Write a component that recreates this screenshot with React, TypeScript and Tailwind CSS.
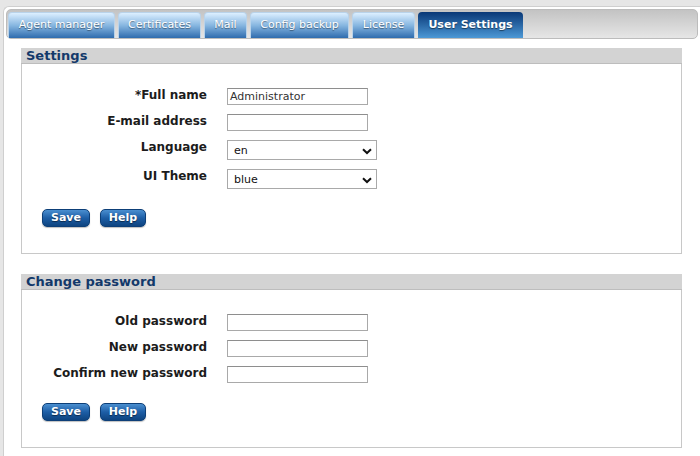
import React from 'react';

const tabs = [
  { t: 'Agent manager', w: 'w-[107px]' },
  { t: 'Certificates', w: 'w-[83px]' },
  { t: 'Mail', w: 'w-[43px]' },
  { t: 'Config backup', w: 'w-[99px]' },
  { t: 'License', w: 'w-[63px]' },
  { t: 'User Settings', w: 'w-[105px]' },
];

const Chevron: React.FC = () => (
  <svg width="10" height="7" viewBox="0 0 10 7" className="absolute right-[4px] top-[7px]">
    <path d="M1 1.2 L5 5 L9 1.2" fill="none" stroke="#111" strokeWidth="2" />
  </svg>
);

const TextBox: React.FC<{ value?: string }> = ({ value }) => (
  <div className="h-[17px] w-[141px] border border-[#a9a9a9] border-t-[#8e8e8e] bg-white pl-[2px] text-[11px] leading-[15px] text-[#333]">
    {value}
  </div>
);

const SelectBox: React.FC<{ value: string }> = ({ value }) => (
  <div className="relative h-[20px] w-[150px] border border-[#a9a9a9] bg-white pl-[6px] text-[11px] leading-[19px] text-[#111]">
    {value}
    <Chevron />
  </div>
);

const Btn: React.FC<{ label: string; w: string }> = ({ label, w }) => (
  <div
    className={`${w} flex h-[18px] items-center justify-center rounded-[5px] border border-[#0d3f78] bg-gradient-to-b from-[#4a8fd0] via-[#1d5ea6] to-[#0e4480] text-[11px] font-bold text-white shadow-[0_1px_1px_rgba(0,0,0,0.25)] [text-shadow:0_1px_1px_rgba(0,0,0,0.5)]`}
  >
    {label}
  </div>
);

type Row = { label: string; field: React.ReactNode };

const Section: React.FC<{ title: string; rows: Row[]; mt: string }> = ({ title, rows, mt }) => (
  <section className={`${mt} w-[661px]`}>
    <div className="h-[16px] border-b border-[#bdbdbd] bg-[#d3d3d3] pl-[5px] text-[13px] font-bold leading-[15px] text-[#13396a]">
      {title}
    </div>
    <div className="border-x border-b border-[#c8c8c8] pb-[26px] pt-[24px]">
      <div className="flex flex-col gap-[9px]">
        {rows.map((r) => (
          <div key={r.label} className="flex items-start">
            <div className="w-[185px] text-right text-[12px] font-bold leading-[14px] text-[#1c1c1c]">
              {r.label}
            </div>
            <div className="ml-[20px]">{r.field}</div>
          </div>
        ))}
      </div>
      <div className="ml-[20px] mt-[20px] flex gap-[10px]">
        <Btn label="Save" w="w-[48px]" />
        <Btn label="Help" w="w-[46px]" />
      </div>
    </div>
  </section>
);

export default function App() {
  return (
    <div className="h-screen overflow-hidden bg-[#e6e6e6] pl-[3px] pt-[6px] font-['DejaVu_Sans',Verdana,sans-serif]">
      <div className="h-full rounded-tl-[6px] border-l border-t border-[#cfcfcf] bg-white px-[2px] pt-[2px]">
        <div className="flex h-[30px] items-end gap-[3px] rounded-[5px] border border-[#bcbcbc] bg-gradient-to-b from-[#c3c3c3] to-[#e6e6e6] pl-[1px]">
          {tabs.map(({ t, w }, i) => {
            const active = i === tabs.length - 1;
            return (
              <div
                key={t}
                className={
                  active
                    ? `${w} flex h-[26px] items-center justify-center rounded-t-[4px] bg-gradient-to-b from-[#093877] to-[#4d99d6] text-[11px] font-bold text-white [text-shadow:0_1px_1px_rgba(0,0,0,0.5)]`
                    : `${w} flex h-[26px] items-center justify-center rounded-t-[4px] border border-b-0 border-[#b9d3ea] bg-gradient-to-b from-[#dcefff] via-[#86b6e0] to-[#2e6cae] text-[11px] text-white [text-shadow:0_1px_1px_rgba(0,0,0,0.45)]`
                }
              >
                {t}
              </div>
            );
          })}
        </div>
        <div className="ml-[15px]">
          <Section
            title="Settings"
            mt="mt-[9px]"
            rows={[
              { label: '*Full name', field: <TextBox value="Administrator" /> },
              { label: 'E-mail address', field: <TextBox /> },
              { label: 'Language', field: <SelectBox value="en" /> },
              { label: 'UI Theme', field: <SelectBox value="blue" /> },
            ]}
          />
          <Section
            title="Change password"
            mt="mt-[20px]"
            rows={[
              { label: 'Old password', field: <TextBox /> },
              { label: 'New password', field: <TextBox /> },
              { label: 'Confirm new password', field: <TextBox /> },
            ]}
          />
        </div>
      </div>
    </div>
  );
}
